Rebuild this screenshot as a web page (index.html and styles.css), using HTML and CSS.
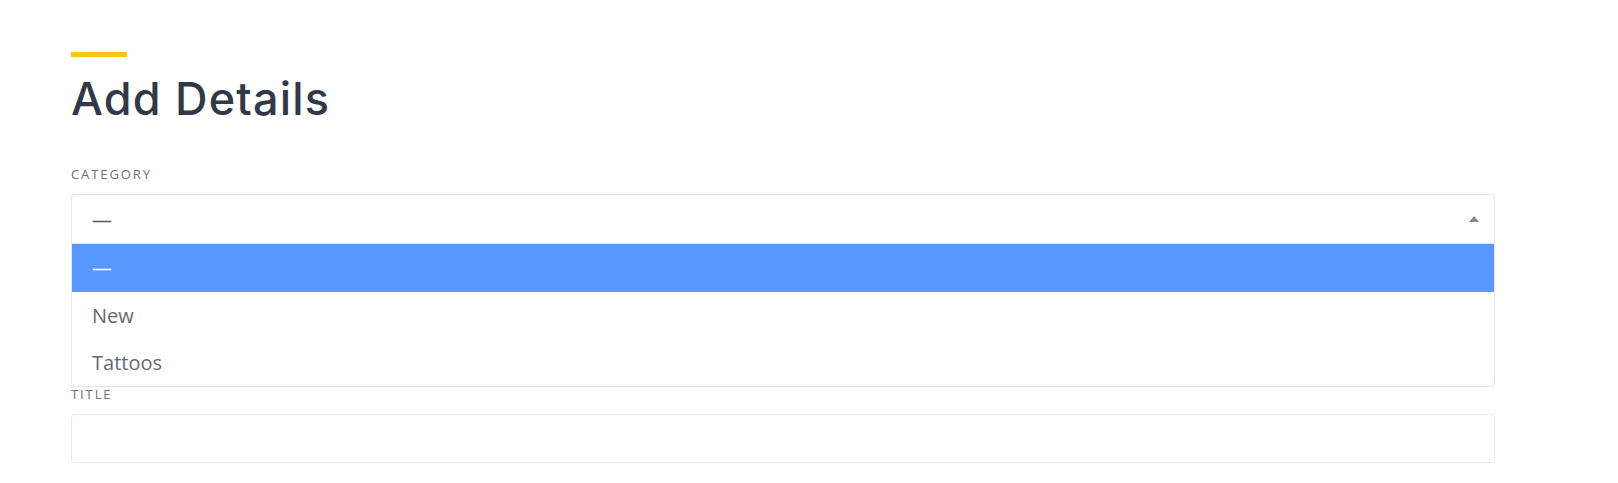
FILE: index.html
```html
<!DOCTYPE html>
<html lang="en">
<head>
  <meta charset="UTF-8">
  <meta name="viewport" content="width=device-width, initial-scale=1.0">
  <title>Add Details</title>
  <link rel="stylesheet" href="styles.css">
</head>
<body>

  <div class="details-form">
    <div class="heading-bar"></div>
    <h1>Add Details</h1>

    <div class="field field-category">
      <label for="category">Category</label>
      <div class="select select-open" id="category">
        <span class="select-value">&mdash;</span>
        <span class="select-arrow"></span>
        <ul class="select-dropdown">
          <li class="option option-active">&mdash;</li>
          <li class="option">New</li>
          <li class="option">Tattoos</li>
        </ul>
      </div>
    </div>

    <div class="field">
      <label for="title">Title</label>
      <input type="text" id="title">
    </div>
  </div>

</body>
</html>
```

FILE: styles.css
```css
body {
  margin: 0;
  background: #fff;
  font-family: "Open Sans", "Liberation Sans", sans-serif;
}
.details-form {
  width: 1424px;
  padding: 52px 0 0 71px;
}
.heading-bar {
  width: 56px;
  height: 5px;
  background-color: #fcc419;
}
h1 {
  margin: 14px 0 0;
  font-family: Inter, "Liberation Sans", sans-serif;
  font-size: 45px;
  font-weight: 500;
  line-height: 56px;
  letter-spacing: 1.2px;
  color: #313847;
}
.field label {
  display: block;
  font-size: 13px;
  line-height: 18px;
  letter-spacing: 1.9px;
  text-transform: uppercase;
  color: #6e7276;
  margin-bottom: 11px;
}
.field-category {
  margin-top: 38px;
  margin-bottom: 141px;
}
.select {
  position: relative;
  box-sizing: border-box;
  height: 50px;
  border: 1px solid #e8e8e8;
  border-radius: 4px;
  display: flex;
  align-items: center;
  padding: 0 20px;
}
.select-open {
  border-bottom-left-radius: 0;
  border-bottom-right-radius: 0;
}
.select-value {
  flex: 1;
  font-size: 20px;
  color: #555;
}
.select-arrow {
  width: 0;
  height: 0;
  border-style: solid;
  border-width: 0 5px 6px 5px;
  border-color: transparent transparent #888 transparent;
  margin-right: -5px;
}
.select-dropdown {
  position: absolute;
  top: 49px;
  left: -1px;
  right: -1px;
  margin: 0;
  padding: 0;
  list-style: none;
  background: #fff;
  border: 1px solid #e8e8e8;
  border-top: none;
  border-radius: 0 0 4px 4px;
  z-index: 10;
}
.option {
  height: 47px;
  line-height: 47px;
  padding: 0 20px;
  font-size: 20px;
  color: #666a6e;
}
.option-active {
  height: 48px;
  line-height: 48px;
  background-color: #5897fb;
  color: #fff;
}
input {
  display: block;
  box-sizing: border-box;
  width: 100%;
  height: 49px;
  margin-top: 1px;
  border: 1px solid #e8e8e8;
  border-radius: 4px;
  padding: 0 20px;
  font-family: inherit;
  font-size: 20px;
}
```
